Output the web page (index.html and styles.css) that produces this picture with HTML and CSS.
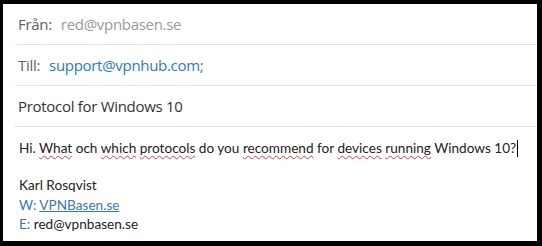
FILE: index.html
```html
<!DOCTYPE html>
<html lang="sv">
<head>
<meta charset="utf-8">
<title>Mail</title>
<link rel="stylesheet" href="styles.css">
</head>
<body>
<div class="frame">
  <div class="headers">
    <div class="row"><div class="label">Från:</div><div class="from">red@vpnbasen.se</div></div>
    <div class="row"><div class="label">Till:</div><div class="to">support@vpnhub.com;</div></div>
    <div class="row"><div class="subject">Protocol for Windows 10</div></div>
  </div>
  <div class="body">
    <p class="msg">Hi. <span class="sp">What</span> och <span class="sp">which</span> <span class="sp">protocols</span> do you <span class="sp">recommend</span> for <span class="sp">devices</span> <span class="sp">running</span> Windows 10?<span class="caret"></span></p>
    <div class="sig">
      <div>Karl Rosqvist</div>
      <div><span class="blue">W:</span> <a class="link" href="#">VPNBasen.se</a></div>
      <div><span class="blue">E:</span> red@vpnbasen.se</div>
    </div>
  </div>
</div>
</body>
</html>
```

FILE: styles.css
```css
html, body {
  margin: 0;
  padding: 0;
  background: #000;
}
body {
  width: 542px;
  height: 246px;
  overflow: hidden;
}
.frame {
  margin: 4px 5px 0 3px;
  height: 237px;
  background: #fff;
  display: flex;
  flex-direction: column;
}
.headers {
  margin-left: 12px;
  margin-right: 1px;
  font-family: "Open Sans", "Noto Sans", sans-serif;
  font-size: 15px;
  letter-spacing: -0.3px;
}
.row {
  height: 40px;
  border-bottom: 1px solid #e3e3e3;
  display: flex;
  align-items: center;
  padding-left: 3px;
}
.label {
  margin-right: 9px;
  color: #5f5f5f;
}
.from {
  color: #9a9a9a;
}
.to {
  color: #2b7bbd;
}
.subject {
  color: #333;
}
.body {
  padding-left: 16px;
  font-family: "Lato", "Liberation Sans", sans-serif;
  font-size: 13.6px;
  color: #222;
}
.msg {
  margin: 11px 0 0 0;
  line-height: 20px;
}
.sp {
  text-decoration: underline wavy #d93a3a;
  text-decoration-thickness: 1px;
  text-underline-offset: 2px;
}
.caret {
  display: inline-block;
  width: 1px;
  height: 17px;
  background: #000;
  margin-left: 1px;
  vertical-align: -4px;
}
.sig {
  margin-top: 18px;
  line-height: 19.5px;
}
.blue {
  color: #3a78b5;
}
.link {
  color: #3a78b5;
  text-decoration: underline;
}
```
